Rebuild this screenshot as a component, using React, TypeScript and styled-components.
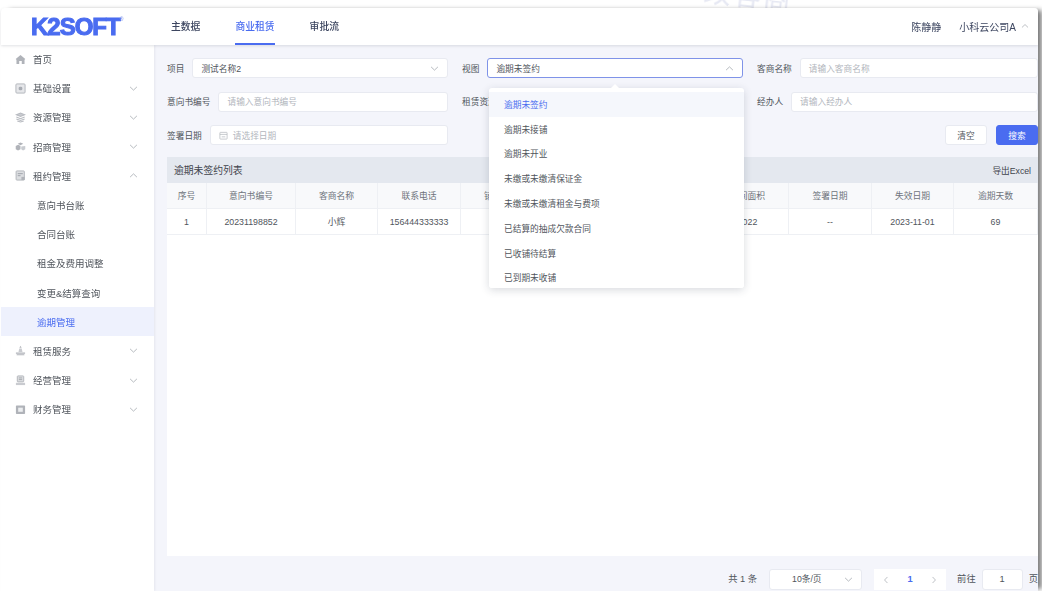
import React from 'react'
import styled, { createGlobalStyle } from 'styled-components'

const GlobalStyle = createGlobalStyle`
  html, body {
    margin: 0;
    height: 100%;
    background: #fff;
    overflow: hidden;
  }
  body {
    font-family: "Liberation Sans", "Noto Sans CJK SC", sans-serif;
    color: #4a4f57;
  }
  * { box-sizing: border-box; }
`

const menu = [
  { label: '首页', icon: 'home' },
  { label: '基础设置', icon: 'box', arrow: 'down' },
  { label: '资源管理', icon: 'layers', arrow: 'down' },
  { label: '招商管理', icon: 'cubes', arrow: 'down' },
  { label: '租约管理', icon: 'doc', arrow: 'up' },
]
const subMenu = ['意向书台账', '合同台账', '租金及费用调整', '变更&结算查询', '逾期管理']
const menuAfter = [
  { label: '租赁服务', icon: 'service', arrow: 'down' },
  { label: '经营管理', icon: 'stack', arrow: 'down' },
  { label: '财务管理', icon: 'wallet', arrow: 'down' },
]
const options = [
  '逾期未签约',
  '逾期未接铺',
  '逾期未开业',
  '未缴或未缴清保证金',
  '未缴或未缴清租金与费项',
  '已结算的抽成欠款合同',
  '已收铺待结算',
  '已到期未收铺',
]
const headers = ['序号', '意向书编号', '客商名称', '联系电话', '铺位编号', '', '', '房间面积', '签署日期', '失效日期', '逾期天数']
const row = ['1', '20231198852', '小辉', '156444333333', '', '', '', '1022', '--', '2023-11-01', '69']

const Icon = ({ name }: { name: string }) => {
  switch (name) {
    case 'home':
      return (
        <svg width="11" height="11" viewBox="0 0 12 12" fill="#b0b3b9">
          <path d="M6 1 11.2 5.4 10.4 6.2V11H7.4V7.6H4.6V11H1.6V6.2L.8 5.4Z" />
        </svg>
      )
    case 'box':
      return (
        <svg width="11" height="11" viewBox="0 0 12 12" fill="none">
          <rect x="1" y="1" width="10" height="10" rx="1" fill="#e6e7ea" stroke="#b0b3b9" />
          <rect x="4" y="4" width="4" height="4" rx="1.5" fill="#a8acb3" />
        </svg>
      )
    case 'layers':
      return (
        <svg width="11" height="11" viewBox="0 0 12 12" fill="none" stroke="#b8bbc1" strokeWidth="1.1">
          <path d="M1.5 3 6 1.2 10.5 3 6 4.8Z" fill="#c9cbd0" />
          <path d="M1.5 5.5 6 7.3 10.5 5.5" />
          <path d="M1.5 7.7 6 9.3 10.5 7.7" />
          <path d="M2.5 9.8 6 11 9.5 9.8" />
        </svg>
      )
    case 'cubes':
      return (
        <svg width="11" height="11" viewBox="0 0 12 12" fill="#b0b3b9">
          <path d="M6 1.5 9 3 6 4.5 3 3Z" />
          <path d="M.8 5.5 3.5 4.2 6 5.5V9L3.3 10.3.8 9Z" />
          <path d="M6.8 6 11.2 5.5V9L8.8 10.3 6.8 9Z" fill="#c8cbd0" />
        </svg>
      )
    case 'doc':
      return (
        <svg width="11" height="11" viewBox="0 0 12 12" fill="none">
          <rect x="1.2" y="1" width="9" height="10" rx=".8" fill="#dcdee1" stroke="#b0b3b9" />
          <path d="M3 4H8.5M3 6.2H6" stroke="#9a9ea5" />
          <rect x="7" y="7.5" width="3.5" height="3.5" fill="#b0b3b9" />
        </svg>
      )
    case 'service':
      return (
        <svg width="11" height="11" viewBox="0 0 12 12" fill="#b0b3b9">
          <path d="M6 .8 7.2 3H4.8Z" />
          <path d="M4.7 3.8H7.3L8.2 7.5H3.8Z" fill="#c9cbd0" />
          <path d="M1 8.3H11V9.5H1ZM1.8 10H10.2V11.2H1.8Z" />
        </svg>
      )
    case 'stack':
      return (
        <svg width="11" height="11" viewBox="0 0 12 12" fill="none">
          <rect x="2.5" y="1" width="7" height="6.5" rx=".8" fill="#dcdee1" stroke="#b0b3b9" />
          <path d="M4.2 3.2H7.8M4.2 5H7.8" stroke="#a5a8ae" />
          <path d="M1 8.5H11V11H1Z" fill="#c9cbd0" />
        </svg>
      )
    default:
      return (
        <svg width="11" height="11" viewBox="0 0 12 12" fill="none">
          <rect x="1" y="1.5" width="10" height="9.5" rx=".8" fill="#b0b3b9" />
          <rect x="3.5" y="4" width="5" height="4.5" fill="#eceef0" />
        </svg>
      )
  }
}

const Chevron = ({ up, size = 9, color = '#a5a9b0' }: { up?: boolean; size?: number; color?: string }) => (
  <svg width={size} height={size} viewBox="0 0 10 10" fill="none" stroke={color} strokeWidth="0.9">
    <path d={up ? 'M1.2 6.8 5 3.2 8.8 6.8' : 'M1.2 3.2 5 6.8 8.8 3.2'} />
  </svg>
)

const PageArrow = ({ next }: { next?: boolean }) => (
  <svg width="8" height="8" viewBox="0 0 10 10" fill="none" stroke="#a5a9b0" strokeWidth="0.9">
    <path d={next ? 'M3.2 1.2 6.8 5 3.2 8.8' : 'M6.8 1.2 3.2 5 6.8 8.8'} />
  </svg>
)

export default function App() {
  return (
    <>
      <GlobalStyle />
      <Watermark>改客商</Watermark>
      <Shell>
        <Header>
          <Logo>
            K2SOFT<sup>®</sup>
          </Logo>
          <Tabs>
            <Tab>主数据</Tab>
            <Tab $active>商业租赁</Tab>
            <Tab>审批流</Tab>
          </Tabs>
          <UserName>陈静静</UserName>
          <Company>
            小科云公司A
            <Chevron up size={8} />
          </Company>
        </Header>
        <Body>
          <Sidebar>
            {menu.map(m => (
              <MenuItem key={m.label}>
                <Icon name={m.icon} />
                <span>{m.label}</span>
                {m.arrow && (
                  <ArrowSlot>
                    <Chevron up={m.arrow === 'up'} />
                  </ArrowSlot>
                )}
              </MenuItem>
            ))}
            {subMenu.map(s => (
              <SubItem key={s} $active={s === '逾期管理'}>
                {s}
              </SubItem>
            ))}
            {menuAfter.map(m => (
              <MenuItem key={m.label}>
                <Icon name={m.icon} />
                <span>{m.label}</span>
                <ArrowSlot>
                  <Chevron />
                </ArrowSlot>
              </MenuItem>
            ))}
          </Sidebar>
          <Main>
            <FilterGrid>
              <Field>
                <Label>项目</Label>
                <Control>
                  <Value>测试名称2</Value>
                  <Chevron />
                </Control>
              </Field>
              <Field>
                <Label>视图</Label>
                <Control $focus>
                  <Value>逾期未签约</Value>
                  <Chevron up />
                </Control>
                <Dropdown>
                  <Caret />
                  <OptionList>
                    {options.map((o, i) => (
                      <Option key={o} $selected={i === 0}>
                        {o}
                      </Option>
                    ))}
                  </OptionList>
                </Dropdown>
              </Field>
              <Field>
                <Label>客商名称</Label>
                <Control>
                  <Placeholder>请输入客商名称</Placeholder>
                </Control>
              </Field>
              <Field>
                <Label>意向书编号</Label>
                <Control>
                  <Placeholder>请输入意向书编号</Placeholder>
                </Control>
              </Field>
              <Field>
                <Label>租赁资源</Label>
                <Control />
              </Field>
              <Field>
                <Label>经办人</Label>
                <Control>
                  <Placeholder>请输入经办人</Placeholder>
                </Control>
              </Field>
              <Field>
                <Label>签署日期</Label>
                <Control>
                  <svg width="9" height="9" viewBox="0 0 10 10" fill="none" stroke="#b4b8be" strokeWidth=".8">
                    <rect x="1" y="1.5" width="8" height="7.5" rx=".6" />
                    <path d="M1 3.8H9M3 6.5H7" />
                  </svg>
                  <DatePlaceholder>请选择日期</DatePlaceholder>
                </Control>
              </Field>
              <Field />
              <Actions>
                <PlainButton>清空</PlainButton>
                <PrimaryButton>搜索</PrimaryButton>
              </Actions>
            </FilterGrid>
            <TablePanel>
              <TableTitle>
                <span>逾期未签约列表</span>
                <Export>导出Excel</Export>
              </TableTitle>
              <HeadRow>
                {headers.map((h, i) => (
                  <Cell key={i}>{h}</Cell>
                ))}
              </HeadRow>
              <DataRow>
                {row.map((c, i) => (
                  <Cell key={i}>{c}</Cell>
                ))}
              </DataRow>
            </TablePanel>
            <Pagination>
              <span>共 1 条</span>
              <SizeSelect>
                <span>10条/页</span>
                <Chevron />
              </SizeSelect>
              <Pager>
                <PagerButton>
                  <PageArrow />
                </PagerButton>
                <PagerButton $current>1</PagerButton>
                <PagerButton>
                  <PageArrow next />
                </PagerButton>
              </Pager>
              <Jump>
                前往
                <JumpInput>1</JumpInput>
                页
              </Jump>
            </Pagination>
          </Main>
        </Body>
      </Shell>
    </>
  )
}

const Watermark = styled.div`
  position: fixed;
  left: 703px;
  top: -18px;
  font-size: 28px;
  line-height: 30px;
  letter-spacing: 2px;
  color: #e6e8f3;
  transform: rotate(6deg);
`
const Shell = styled.div`
  position: relative;
  width: 1037px;
  height: 583px;
  margin: 8px 0 0 1px;
  display: flex;
  flex-direction: column;
  background: #fff;
  border-radius: 4px 4px 0 0;
  box-shadow: 6px 0 5px -2px rgba(0, 0, 0, 0.5);
  filter: blur(0.4px);
`
const Header = styled.header`
  height: 36.5px;
  flex: none;
  display: flex;
  align-items: stretch;
  background: #fff;
  border-radius: 4px 4px 0 0;
  box-shadow: 0 1px 3px rgba(60, 70, 90, 0.16);
  position: relative;
  z-index: 2;
`
const Logo = styled.div`
  width: 170px;
  padding: 5px 0 0 30px;
  font-weight: 700;
  font-size: 24px;
  line-height: 28px;
  letter-spacing: -1px;
  color: #4a6cf0;
  -webkit-text-stroke: 1.1px #4a6cf0;
  sup {
    font-size: 5px;
    line-height: 0;
    letter-spacing: 0;
    -webkit-text-stroke: 0;
    vertical-align: 14px;
    color: #8fa3ee;
  }
`
const Tabs = styled.nav`
  display: flex;
  flex: 1;
  gap: 35px;
`
const Tab = styled.div<{ $active?: boolean }>`
  display: flex;
  align-items: center;
  padding-top: 1px;
  font-size: 9.8px;
  font-weight: 500;
  color: ${p => (p.$active ? '#4a6cf0' : '#3d4660')};
  border-bottom: 2px solid ${p => (p.$active ? '#4a6cf0' : 'transparent')};
`
const UserName = styled.div`
  display: flex;
  align-items: center;
  margin-right: 18px;
  font-size: 10px;
  color: #3d4660;
`
const Company = styled.div`
  display: flex;
  align-items: center;
  gap: 5px;
  margin-right: 9px;
  font-size: 10px;
  color: #3d4660;
`
const Body = styled.div`
  flex: 1;
  min-height: 0;
  display: flex;
`
const Sidebar = styled.aside`
  width: 153px;
  flex: none;
  background: #fff;
  box-shadow: 1px 0 2px rgba(60, 70, 90, 0.08);
  position: relative;
  z-index: 1;
`
const MenuItem = styled.div`
  height: 29.2px;
  display: flex;
  align-items: center;
  padding: 0 16px 0 14px;
  gap: 7px;
  font-size: 9.5px;
  color: #50555c;
`
const ArrowSlot = styled.span`
  margin-left: auto;
  display: flex;
`
const SubItem = styled.div<{ $active?: boolean }>`
  height: 29.2px;
  display: flex;
  align-items: center;
  padding-left: 36px;
  font-size: 9.5px;
  color: ${p => (p.$active ? '#4a6cf0' : '#50555c')};
  background: ${p => (p.$active ? '#eef1fd' : 'transparent')};
`
const Main = styled.main`
  flex: 1;
  min-width: 0;
  display: flex;
  flex-direction: column;
  padding: 13.5px 0 0 13px;
  background: #f4f5fb;
`
const FilterGrid = styled.div`
  display: grid;
  grid-template-columns: repeat(3, 1fr);
  grid-auto-rows: 20px;
  column-gap: 14px;
  row-gap: 13.5px;
`
const Field = styled.div`
  display: flex;
  align-items: center;
  position: relative;
  min-width: 0;
`
const Label = styled.label`
  flex: none;
  margin-right: 8px;
  font-size: 8.7px;
  color: #50555c;
`
const Control = styled.div<{ $focus?: boolean }>`
  flex: 1;
  min-width: 0;
  height: 20px;
  display: flex;
  align-items: center;
  padding: 0 8px;
  background: #fff;
  border: 1px solid ${p => (p.$focus ? '#7f93e8' : '#e8eaf1')};
  border-radius: 3px;
  font-size: 8.7px;
`
const Value = styled.span`
  flex: 1;
  color: #50555c;
`
const Placeholder = styled.span`
  color: #b2b6bd;
`
const DatePlaceholder = styled(Placeholder)`
  margin-left: 5px;
`
const Dropdown = styled.div`
  position: absolute;
  left: 27px;
  top: 30px;
  width: 255px;
  height: 200px;
  background: #fff;
  border-radius: 3px;
  box-shadow: 0 2px 9px rgba(40, 50, 70, 0.18);
  z-index: 5;
`
const Caret = styled.div`
  position: absolute;
  top: -4px;
  left: 122px;
  width: 0;
  height: 0;
  border-left: 4px solid transparent;
  border-right: 4px solid transparent;
  border-bottom: 4px solid #fff;
`
const OptionList = styled.ul`
  list-style: none;
  margin: 0;
  padding: 4px 0 0;
  height: 100%;
  overflow: hidden;
  border-radius: 3px;
`
const Option = styled.li<{ $selected?: boolean }>`
  height: 24.8px;
  display: flex;
  align-items: center;
  padding-left: 15px;
  font-size: 8.7px;
  color: ${p => (p.$selected ? '#4a6cf0' : '#50555c')};
  background: ${p => (p.$selected ? '#f5f7fc' : '#fff')};
`
const Actions = styled.div`
  display: flex;
  justify-content: flex-end;
  align-items: center;
  gap: 9px;
`
const PlainButton = styled.button`
  width: 42px;
  height: 20px;
  padding: 0;
  font: inherit;
  font-size: 8.7px;
  color: #50555c;
  background: #fff;
  border: 1px solid #e8eaf1;
  border-radius: 3px;
`
const PrimaryButton = styled(PlainButton)`
  color: #fff;
  background: #4a6cf0;
  border-color: #4a6cf0;
`
const TablePanel = styled.section`
  flex: 1;
  min-height: 0;
  margin-top: 12px;
  background: #fff;
`
const TableTitle = styled.div`
  height: 26px;
  display: flex;
  align-items: center;
  justify-content: space-between;
  padding: 0 7px;
  background: #e4e8ef;
  font-size: 9.8px;
  color: #3f444c;
`
const Export = styled.span`
  font-size: 8.7px;
`
const HeadRow = styled.div`
  height: 26px;
  display: grid;
  grid-template-columns: 40px 89px 82px 83px 82px 82px 82px 82px 83px 82px 1fr;
  background: #f8f9fb;
  border-bottom: 1px solid #eef0f4;
  font-size: 8.8px;
  color: #6f747b;
`
const DataRow = styled(HeadRow)`
  background: #fff;
  color: #50555c;
`
const Cell = styled.div`
  display: flex;
  align-items: center;
  justify-content: center;
  border-right: 1px solid #eef0f4;
  white-space: nowrap;
`
const Pagination = styled.footer`
  height: 35px;
  flex: none;
  display: flex;
  align-items: flex-start;
  justify-content: flex-end;
  padding-top: 13px;
  font-size: 9.3px;
  line-height: 21px;
  color: #50555c;
`
const SizeSelect = styled.div`
  width: 93px;
  height: 21px;
  margin-left: 12px;
  padding: 0 8px 0 22px;
  display: flex;
  align-items: center;
  justify-content: space-between;
  background: #fff;
  border: 1px solid #e8eaf1;
  border-radius: 3px;
  font-size: 8.7px;
`
const Pager = styled.div`
  display: flex;
  margin-left: 12px;
`
const PagerButton = styled.div<{ $current?: boolean }>`
  width: 24px;
  height: 21px;
  display: flex;
  align-items: center;
  justify-content: center;
  background: #fff;
  font-weight: ${p => (p.$current ? 700 : 400)};
  color: ${p => (p.$current ? '#4a6cf0' : '#a5a9b0')};
`
const Jump = styled.div`
  display: flex;
  margin-left: 11px;
  gap: 6px;
  white-space: nowrap;
`
const JumpInput = styled.div`
  width: 41px;
  height: 21px;
  flex: none;
  text-align: center;
  background: #fff;
  border: 1px solid #e8eaf1;
  border-radius: 3px;
  line-height: 19px;
`
